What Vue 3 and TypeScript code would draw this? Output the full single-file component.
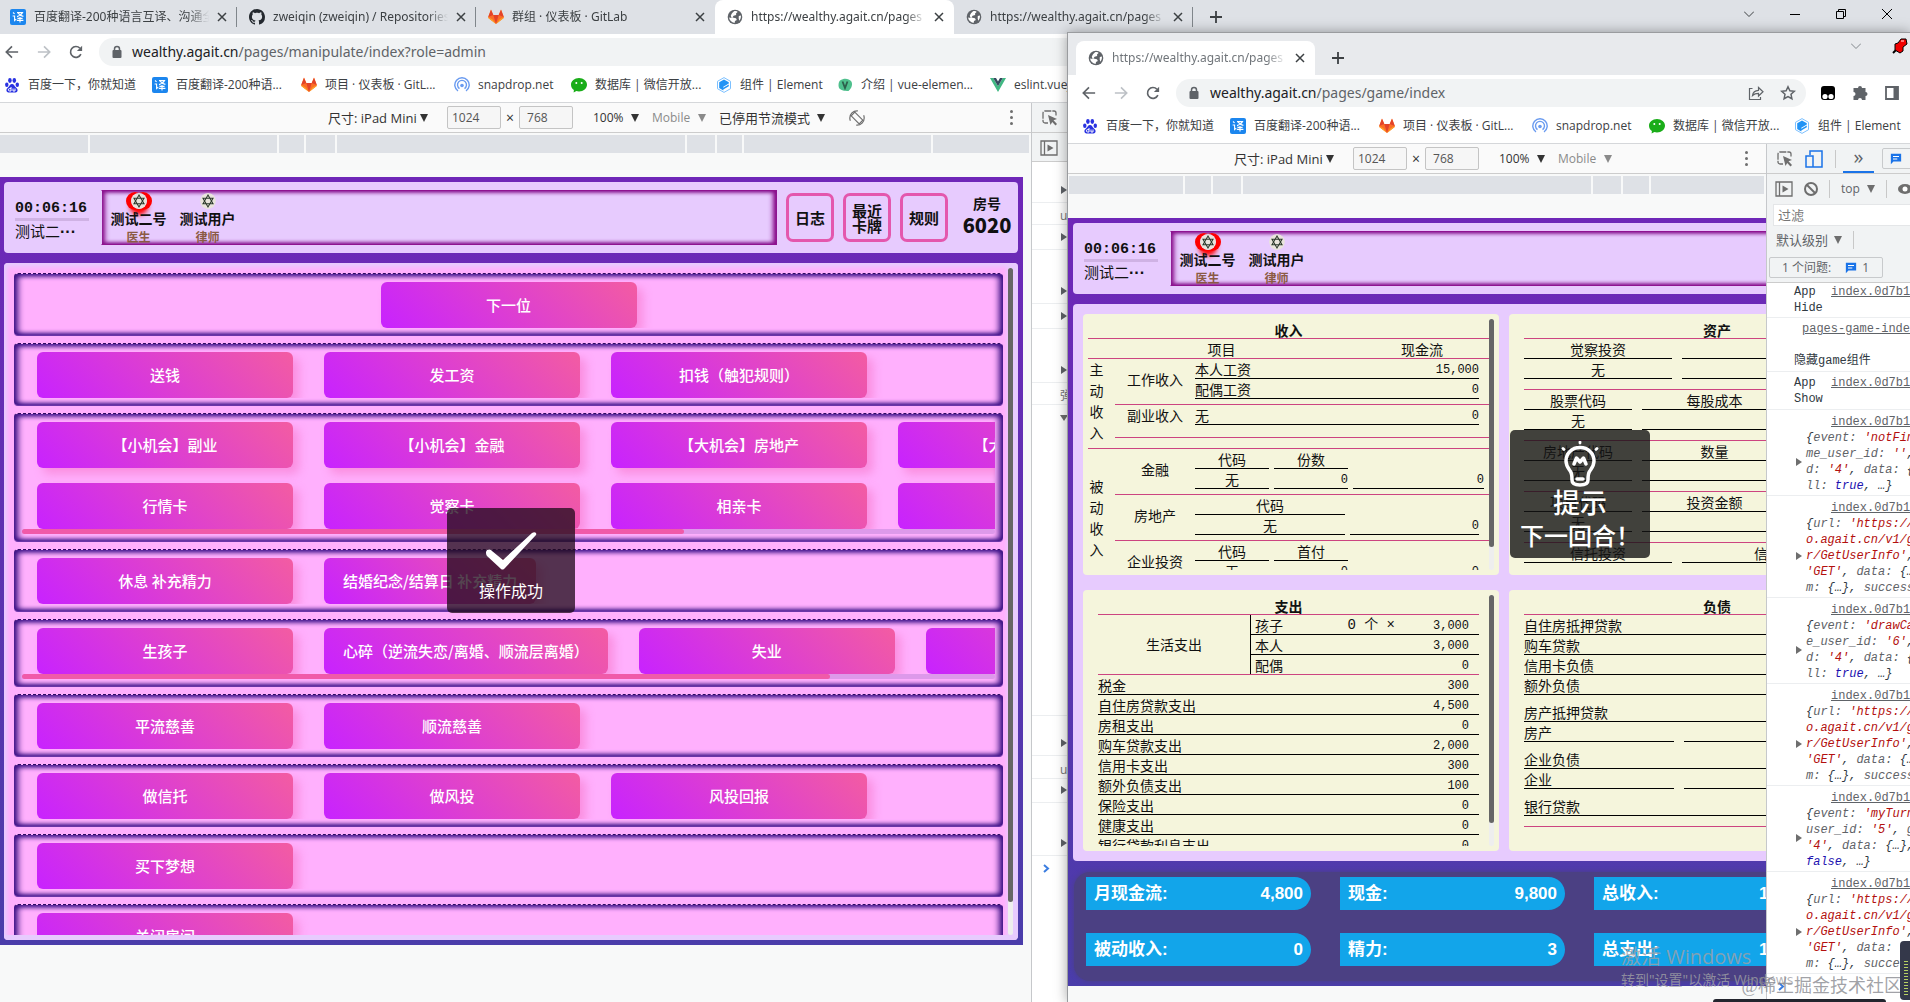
<script setup lang="ts">
interface Tab { icon: string; title: string; active?: boolean }
interface Bookmark { icon: string; label: string; width: number }
interface Action { label: string; fit?: boolean }
interface Section { rows: Action[][]; center?: boolean; bar?: number }
interface Token { t: string; k?: 'str' | 'bool' | 'key' }

const tabs: Tab[] = [
  { icon: 'fanyi', title: '百度翻译-200种语言互译、沟通全' },
  { icon: 'github', title: 'zweiqin (zweiqin) / Repositories' },
  { icon: 'gitlab', title: '群组 · 仪表板 · GitLab' },
  { icon: 'globe', title: 'https://wealthy.agait.cn/pages', active: true },
  { icon: 'globe', title: 'https://wealthy.agait.cn/pages' },
]

const bookmarks: Bookmark[] = [
  { icon: 'baidu', label: '百度一下，你就知道', width: 108 },
  { icon: 'fanyi', label: '百度翻译-200种语...', width: 109 },
  { icon: 'gitlab', label: '项目 · 仪表板 · GitL...', width: 113 },
  { icon: 'snapdrop', label: 'snapdrop.net', width: 77 },
  { icon: 'wechat', label: '数据库 | 微信开放...', width: 105 },
  { icon: 'element', label: '组件 | Element', width: 81 },
  { icon: 'velement', label: '介绍 | vue-elemen...', width: 113 },
  { icon: 'vue', label: 'eslint.vuejs', width: 70 },
]

const players = [
  { name: '测试二号', job: '医生', current: true },
  { name: '测试用户', job: '律师', current: false },
]

const a = (label: string, fit = false): Action => ({ label, fit })
const sections: Section[] = [
  { rows: [[a('下一位')]], center: true },
  { rows: [[a('送钱'), a('发工资'), a('扣钱（触犯规则）')]] },
  {
    rows: [
      [a('【小机会】副业'), a('【小机会】金融'), a('【大机会】房地产'), a('【大机会】企业')],
      [a('行情卡'), a('觉察卡'), a('相亲卡'), a('')],
    ],
    bar: 68,
  },
  { rows: [[a('休息 补充精力'), a('结婚纪念/结算日 补充精力', true)]] },
  { rows: [[a('生孩子'), a('心碎（逆流失恋/离婚、顺流层离婚）', true), a('失业'), a('')]], bar: 83 },
  { rows: [[a('平流慈善'), a('顺流慈善')]] },
  { rows: [[a('做信托'), a('做风投'), a('风投回报')]] },
  { rows: [[a('买下梦想')]] },
  { rows: [[a('关闭房间')]] },
]

const sideRows = [
  { h: 41, kind: 'closed' }, { h: 22, kind: 'text', text: 'ur' }, { h: 25, kind: 'closed' }, { h: 54, kind: 'closed' },
  { h: 25, kind: 'closed' }, { h: 54, kind: 'closed' }, { h: 22, kind: 'text', text: '弹' }, { h: 311, kind: 'open' },
  { h: 40, kind: 'closed' }, { h: 23, kind: 'text', text: 'ur' }, { h: 24, kind: 'closed' }, { h: 53, kind: 'closed' },
]

const expenses = [
  ['税金', '300'], ['自住房贷款支出', '4,500'], ['房租支出', '0'], ['购车贷款支出', '2,000'],
  ['信用卡支出', '300'], ['额外负债支出', '100'], ['保险支出', '0'], ['健康支出', '0'], ['银行贷款利息支出', '0'],
]
const living = [['孩子', '0 个 ×', '3,000'], ['本人', '', '3,000'], ['配偶', '', '0']]

const assets = [
  { wide: true, heads: ['觉察投资', ''], empty: true },
  { wide: false, heads: ['股票代码', '每股成本'], empty: true },
  { wide: false, heads: ['房地产代码', '数量'], empty: true },
  { wide: false, heads: ['项目代码', '投资金额'], empty: true },
  { wide: true, heads: ['信托投资', '信托投资金额'], empty: false },
]
const debts = [
  { rows: ['自住房抵押贷款', '购车贷款', '信用卡负债', '额外负债'], split: '' },
  { rows: ['房产抵押贷款'], split: '房产' },
  { rows: ['企业负债'], split: '企业' },
  { rows: ['银行贷款'], split: '' },
]

const stats = [
  ['月现金流:', '4,800'], ['现金:', '9,800'], ['总收入:', '15,000'],
  ['被动收入:', '0'], ['精力:', '3'], ['总支出:', '10,200'],
]

const s = (t: string): Token => ({ t, k: 'str' })
const b = (t: string): Token => ({ t, k: 'bool' })
const k = (t: string): Token => ({ t, k: 'key' })
const p = (t: string): Token => ({ t })
const request: Token[][] = [
  [p('{'), k('url: '), s("'https://wealthy")],
  [s('o.agait.cn/v1/game')],
  [s("r/GetUserInfo'"), p(','), k(' method')],
  [s("'GET'"), p(', '), k('data: '), p('{…},')],
  [k('m: '), p('{…}, '), k('success:')],
]
const logs: Token[][][] = [
  [
    [p('{'), k('event: '), s("'notFinish'")],
    [k('me_user_id: '), s("''"), p(',')],
    [k('d: '), s("'4'"), p(', '), k('data: '), p('{…}')],
    [k('ll: '), b('true'), p(', …}')],
  ],
  request,
  [
    [p('{'), k('event: '), s("'drawCard'")],
    [k('e_user_id: '), s("'6'"), p(',')],
    [k('d: '), s("'4'"), p(', '), k('data: '), p('{…}')],
    [k('ll: '), b('true'), p(', …}')],
  ],
  request,
  [
    [p('{'), k('event: '), s("'myTurn'")],
    [k('user_id: '), s("'5'"), p(', '), k('game')],
    [s("'4'"), p(', '), k('data: '), p('{…},')],
    [b('false'), p(', …}')],
  ],
  request,
]
</script>

<template>
  <svg class="defs" aria-hidden="true">
    <symbol id="i-fanyi" viewBox="0 0 16 16">
      <rect width="16" height="16" rx="2" fill="#1c86ee" />
      <path d="M3 3.5l1.6 1.4M2.6 7h2v4.6l1.6-1.4M7 3.6h5.6c-1 2-3 3.3-5.6 4M8 4c1 1.600 3 2.900 5.400 3.400M7.400 9.400h5.200M6.800 11.400h6.600M10 8v5.500" stroke="#fff" stroke-width="1.100" fill="none" />
    </symbol>
    <symbol id="i-github" viewBox="0 0 16 16">
      <path fill="#24292f" d="M8 0C3.580 0 0 3.580 0 8c0 3.540 2.290 6.530 5.470 7.590.4.070.55-.17.55-.38 0-.19-.010-.82-.010-1.490-2.010.37-2.530-.49-2.690-.94-.090-.23-.48-.94-.82-1.130-.28-.15-.68-.52-.010-.53.63-.010 1.080.58 1.230.82.72 1.210 1.870.87 2.330.66.070-.52.28-.87.51-1.070-1.780-.2-3.640-.89-3.640-3.950 0-.87.31-1.590.82-2.150-.080-.2-.36-1.020.080-2.120 0 0 .67-.21 2.200.82.64-.18 1.320-.27 2-.27s1.360.090 2 .27c1.530-1.040 2.200-.82 2.200-.82.44 1.100.16 1.920.080 2.120.51.56.82 1.270.82 2.150 0 3.070-1.870 3.750-3.650 3.950.29.25.54.73.54 1.480 0 1.070-.010 1.930-.010 2.200 0 .21.15.46.55.38A8.010 8.010 0 0 0 16 8c0-4.420-3.580-8-8-8z" />
    </symbol>
    <symbol id="i-gitlab" viewBox="0 0 16 16">
      <path fill="#fc6d26" d="M8 15L.6 9.300c-.4-.4-.5-.8-.4-1.300L2.700 1c.1-.3.5-.3.600 0l2 5h5.400l2-5c.1-.3.500-.3.600 0l2.500 7c.1.500 0 .9-.4 1.300z" />
      <path fill="#e24329" d="M8 15L5.300 6h5.400zM.2 8L3 1l2.300 5zM15.800 8L13 1l-2.300 5z" />
      <path fill="#fca326" d="M8 15L.6 9.300.2 8 4.500 10.500zM8 15l7.400-5.700.4-1.300-4.300 2.500z" />
    </symbol>
    <symbol id="i-globe" viewBox="0 0 16 16">
      <circle cx="8" cy="8" r="7.300" fill="#5f6368" />
      <path fill="#fff" d="M7 2.200c2-.4 3 .2 3.600.8L9 4.400 9.200 6 6.600 6.800 5.400 8.600 9 9.200l.8 1.800-1.800 1L7.600 14C4.500 13.500 2.400 11.200 2.100 8.500L4.600 9 3.800 6.400 5 4.300zM11.800 7l2.100-.6c.2 2-.3 3.800-1.600 5.300l-.6-2.200z" />
    </symbol>
    <symbol id="i-baidu" viewBox="0 0 16 16">
      <g fill="#2932e1"><ellipse cx="2.800" cy="7.800" rx="1.700" ry="2.200" /><ellipse cx="5.900" cy="3.500" rx="1.800" ry="2.400" /><ellipse cx="10.300" cy="3.500" rx="1.800" ry="2.400" /><ellipse cx="13.300" cy="7.800" rx="1.700" ry="2.200" /><path d="M8 7c2 0 2.500 2.200 4 3.500s2 2.500 1.200 4c-1 1.700-3 .9-5.200.9s-4.200.8-5.200-.9c-.8-1.500-.3-2.700 1.200-4S6 7 8 7z" /></g>
      <path d="M7 10v4H5.600a1 1 0 0 1 0-2.400H7M9 11.500V14h2v-2.500" stroke="#fff" fill="none" />
    </symbol>
    <symbol id="i-snapdrop" viewBox="0 0 16 16">
      <g fill="none" stroke="#6a9bf0" stroke-width="1.400"><path d="M4 14a7.200 7.200 0 1 1 8 0" /><path d="M5.500 11.600a4.500 4.500 0 1 1 5 0" /></g>
      <circle cx="8" cy="8.500" r="1.800" fill="#6a9bf0" />
    </symbol>
    <symbol id="i-wechat" viewBox="0 0 16 16">
      <path fill="#1aad19" d="M8 1c4.500 0 8 3 8 6.700s-3.500 6.700-8 6.700c-1 0-1.800-.1-2.600-.3L2.600 15.500l.3-2.600C1.100 11.700 0 9.800 0 7.700 0 4 3.500 1 8 1z" />
      <circle cx="5.300" cy="6" r="1" fill="#fff" /><circle cx="10.700" cy="6" r="1" fill="#fff" />
    </symbol>
    <symbol id="i-element" viewBox="0 0 16 16">
      <path d="M8 .6l6.500 3.700v7.400L8 15.400l-6.500-3.700V4.300z" fill="#fff" stroke="#7cc0ff" />
      <path d="M8 2.500l4.800 2.700v1.300L7.300 9.700v1l5.500-3.100v1.700l-5.500 3.200v1L3.200 11V5.200z" fill="#2193f5" />
    </symbol>
    <symbol id="i-velement" viewBox="0 0 16 16">
      <path d="M3 3.500C7 .5 12 1.500 14 4s1 7-2.500 10c-4 0-9-.5-9.800-4C1.300 7.500 1.500 5 3 3.500z" fill="#4fc08d" />
      <path d="M5.500 4.500L8 11l2.500-6.500" fill="none" stroke="#2c5f4c" stroke-width="1.800" />
    </symbol>
    <symbol id="i-vue" viewBox="0 0 16 16">
      <path fill="#41b883" d="M0 1h3.200L8 9.300 12.800 1H16L8 15z" /><path fill="#35495e" d="M3.200 1H6l2 3.500L10 1h2.800L8 9.300z" />
    </symbol>
    <symbol id="i-back" viewBox="0 0 16 16"><path d="M15 8H2M8 1.500L1.500 8 8 14.500" fill="none" stroke="currentColor" stroke-width="1.900" /></symbol>
    <symbol id="i-fwd" viewBox="0 0 16 16"><path d="M1 8h13M8 1.500L14.500 8 8 14.500" fill="none" stroke="currentColor" stroke-width="1.900" /></symbol>
    <symbol id="i-reload" viewBox="0 0 16 16"><path d="M13.600 10.500A6.200 6.200 0 1 1 12.500 3.700" fill="none" stroke="currentColor" stroke-width="1.900" /><path d="M15 .8v6H9z" fill="currentColor" /></symbol>
    <symbol id="i-lock" viewBox="0 0 12 14"><rect x="1.500" y="5" width="9" height="8" rx="1" fill="#5f6368" /><path d="M3.500 6V4a2.500 2.500 0 0 1 5 0v2" fill="none" stroke="#5f6368" stroke-width="1.500" /></symbol>
    <symbol id="i-close" viewBox="0 0 10 10"><path d="M1 1l8 8M9 1L1 9" stroke="currentColor" stroke-width="1.500" /></symbol>
    <symbol id="i-plus" viewBox="0 0 12 12"><path d="M6 0v12M0 6h12" stroke="currentColor" stroke-width="1.800" /></symbol>
    <symbol id="i-chevron" viewBox="0 0 10 6"><path d="M0 .5l5 5 5-5" fill="none" stroke="currentColor" /></symbol>
    <symbol id="i-inspect" viewBox="0 0 16 16"><path d="M6 13H3a2 2 0 0 1-2-2V3a2 2 0 0 1 2-2h9a2 2 0 0 1 2 2v3" fill="none" stroke="#6e6e6e" stroke-width="1.300" stroke-dasharray="7 1" /><path fill="#6e6e6e" d="M6 5l9 4-3.500 1.200L15 14l-1.500 1.500-3.300-3.600L8.500 15z" /></symbol>
    <symbol id="i-side" viewBox="0 0 18 16"><path d="M1 1h16v14H1zM4.500 1v14" fill="none" stroke="#6e6e6e" stroke-width="1.300" /><path d="M7.500 4.500v7L13.500 8z" fill="#6e6e6e" /></symbol>
    <symbol id="i-rotate" viewBox="0 0 16 16"><g fill="none" stroke="#6e6e6e" stroke-width="1.200"><circle cx="8" cy="8" r="7.200" stroke-dasharray="15 7.600" stroke-dashoffset="3" /><path d="M5.800 2.200l8 8-3.600 3.600-8-8z" fill="#fafafa" /></g></symbol>
    <symbol id="i-chat" viewBox="0 0 14 14"><path fill="#1a73e8" d="M1 1h12v9H4l-3 3z" /><path d="M3.500 4h7M3.500 7h5" stroke="#fff" stroke-width="1.200" /></symbol>
    <symbol id="i-avatar" viewBox="0 0 20 20"><circle cx="10" cy="10" r="10" fill="#e9e4dc" /><path d="M10 2.500l6.300 11H3.700zM10 17.500L3.700 6.500h12.600z" fill="none" stroke="#2c3a2c" stroke-width="1.300" /></symbol>
  </svg>

  <div class="desktop">
    <main class="window back">
      <header class="tabstrip">
        <div v-for="(tab, i) in tabs" :key="i" class="tab" :class="{ active: tab.active, split: i === 0 || i === 1 || i === 4 }">
          <svg class="i16"><use :href="'#i-' + tab.icon" /></svg>
          <span class="tab-title">{{ tab.title }}</span>
          <button class="icon-btn" aria-label="关闭"><svg class="i10"><use href="#i-close" /></svg></button>
        </div>
        <button class="icon-btn plus" aria-label="新标签页"><svg class="i12"><use href="#i-plus" /></svg></button>
        <div class="win-controls">
          <button class="icon-btn" aria-label="搜索标签页"><svg width="10" height="6"><use href="#i-chevron" /></svg></button>
          <button class="icon-btn" aria-label="最小化"><svg width="10" height="10"><path d="M0 5.500h10" stroke="#000" /></svg></button>
          <button class="icon-btn" aria-label="还原"><svg width="10" height="10"><path d="M.5 2.500h7v7h-7zM2.500 2.500v-2h7v7h-2" fill="none" stroke="#000" /></svg></button>
          <button class="icon-btn" aria-label="关闭窗口"><svg width="10" height="10"><path d="M0 0l10 10M10 0L0 10" stroke="#000" /></svg></button>
        </div>
      </header>

      <nav class="toolbar">
        <button class="icon-btn" aria-label="后退"><svg class="i14"><use href="#i-back" /></svg></button>
        <button class="icon-btn dim" aria-label="前进"><svg class="i14"><use href="#i-fwd" /></svg></button>
        <button class="icon-btn" aria-label="刷新"><svg class="i14"><use href="#i-reload" /></svg></button>
        <div class="omnibox">
          <svg width="12" height="14"><use href="#i-lock" /></svg>
          <span class="url"><b>wealthy.agait.cn</b>/pages/manipulate/index?role=admin</span>
        </div>
      </nav>
      <nav class="bookmarks">
        <a v-for="m in bookmarks" :key="m.label" href="#"><svg class="i16"><use :href="'#i-' + m.icon" /></svg><span :style="{ width: m.width + 'px' }">{{ m.label }}</span></a>
      </nav>

      <div class="workarea">
        <section class="device">
          <div class="device-bar">
            <label class="pick"><select class="w-size" aria-label="尺寸"><option>尺寸: iPad Mini</option></select></label>
            <input class="dim-in" value="1024" aria-label="宽度">
            <span class="times">×</span>
            <input class="dim-in" value=" 768" aria-label="高度">
            <label class="pick zoom"><select class="w-zoom" aria-label="缩放"><option>100%</option></select></label>
            <label class="pick gray"><select class="w-mobile" aria-label="设备类型"><option>Mobile</option></select></label>
            <label class="pick"><select class="w-net" aria-label="节流"><option>已停用节流模式</option></select></label>
            <svg class="rot i16"><use href="#i-rotate" /></svg>
            <button class="icon-btn dots" aria-label="更多"><i /><i /><i /></button>
          </div>
          <div class="ruler r1"><i v-for="n in 9" :key="n" /></div>

          <div class="screen screen-full">
            <header class="game-head">
              <div class="clock"><strong>00:06:16</strong><span>测试二<b>···</b></span></div>
              <div class="players">
                <div v-for="u in players" :key="u.name" class="player" :class="{ current: u.current }">
                  <svg class="avatar"><use href="#i-avatar" /></svg><b>{{ u.name }}</b><small>{{ u.job }}</small>
                </div>
              </div>
              <button class="head-btn">日志</button>
              <button class="head-btn">最近卡牌</button>
              <button class="head-btn">规则</button>
              <div class="room"><span>房号</span><strong>6020</strong></div>
            </header>
            <div class="board">
              <div class="sections">
                <section v-for="(sec, i) in sections" :key="i" class="section">
                  <div class="strip" :class="{ center: sec.center }">
                    <div v-for="(row, r) in sec.rows" :key="r" class="actions">
                      <button v-for="(act, j) in row" :key="j" class="action" :class="{ fit: act.fit }">{{ act.label }}</button>
                    </div>
                  </div>
                  <div v-if="sec.bar" class="hbar"><i :style="{ width: sec.bar + '%' }" /></div>
                </section>
              </div>
              <div class="vbar"><i /></div>
            </div>
            <div class="toast ok">
              <svg width="52" height="38" viewBox="0 0 52 38"><path d="M1 20c1-3 4-3 6-1l11 9L47 1c3-2 5 0 4 2L20 36c-2 2-3 2-5 0L2 24c-1-1-1-3-1-4z" fill="#fff" /></svg>
              <span>操作成功</span>
            </div>
          </div>
        </section>

        <aside class="side">
          <div class="side-bar"><svg class="i16"><use href="#i-inspect" /></svg></div>
          <div class="side-bar short"><svg width="18" height="16"><use href="#i-side" /></svg></div>
          <div v-for="(row, i) in sideRows" :key="i" class="side-row" :class="row.kind" :style="{ height: row.h + 'px' }">
            <span v-if="row.kind === 'text'">{{ row.text }}</span><i v-else />
          </div>
          <svg class="prompt" width="7" height="9"><path d="M1 1l4 3.500L1 8" fill="none" stroke="#3b7de0" stroke-width="2" /></svg>
        </aside>
      </div>
    </main>

    <section class="window front">
      <header class="tabstrip">
        <div class="tab active">
          <svg class="i16"><use href="#i-globe" /></svg>
          <span class="tab-title">https://wealthy.agait.cn/pages</span>
          <button class="icon-btn" aria-label="关闭"><svg class="i10"><use href="#i-close" /></svg></button>
        </div>
        <button class="icon-btn plus" aria-label="新标签页"><svg class="i12"><use href="#i-plus" /></svg></button>
        <div class="front-controls">
          <svg width="10" height="6"><use href="#i-chevron" /></svg>
          <svg width="16" height="16" viewBox="0 0 16 16"><path d="M1 15l4-4" stroke="#000" stroke-width="2" /><path d="M3 6l3-1 3-4 5 0 1 5-4 3 0 4-3 2-5-3z" fill="#f00000" stroke="#000" /><path d="M9 3l3 0" stroke="#ff9c9c" stroke-width="1.500" /></svg>
        </div>
      </header>
      <nav class="toolbar">
        <button class="icon-btn" aria-label="后退"><svg class="i14"><use href="#i-back" /></svg></button>
        <button class="icon-btn dim" aria-label="前进"><svg class="i14"><use href="#i-fwd" /></svg></button>
        <button class="icon-btn" aria-label="刷新"><svg class="i14"><use href="#i-reload" /></svg></button>
        <div class="omnibox">
          <svg width="12" height="14"><use href="#i-lock" /></svg>
          <span class="url"><b>wealthy.agait.cn</b>/pages/game/index</span>
          <svg class="i16" viewBox="0 0 16 16"><path d="M4.500 3.500H1.500v11h11v-2.500M4.500 10.500c.5-3.500 2.500-5 6-5.200V2.500l4.500 4.300-4.500 4.200V8.300c-3 0-4.500.7-6 2.200z" fill="none" stroke="#5f6368" stroke-width="1.200" /></svg>
          <svg class="i16" viewBox="0 0 16 16"><path d="M8 1.800l1.900 4 4.400.5-3.300 3 .9 4.400L8 11.500l-3.900 2.200.9-4.400-3.300-3 4.400-.5z" fill="none" stroke="#5f6368" stroke-width="1.500" /></svg>
        </div>
        <div class="exts">
          <svg class="i16" viewBox="0 0 16 16"><rect x="1" y="1" width="14" height="14" rx="3" /><circle cx="5" cy="11.500" r="2.600" fill="#fff" /><circle cx="11" cy="11.500" r="2.600" fill="#fff" /></svg>
          <svg class="i16" viewBox="0 0 16 16"><path fill="#5f6368" d="M6 3a2 2 0 0 1 4 0h3.500v4a2 2 0 0 1 0 4v4H10a2 2 0 0 0-4 0H1.500v-4a2 2 0 0 0 0-4V3z" /></svg>
          <svg class="i16" viewBox="0 0 16 16"><path fill="none" stroke="#5f6368" stroke-width="1.800" d="M2 2h12v12H2z" /><path fill="#5f6368" d="M9.500 2H14v12H9.500z" /></svg>
        </div>
      </nav>
      <nav class="bookmarks">
        <a v-for="m in bookmarks.slice(0, 6)" :key="m.label" href="#"><svg class="i16"><use :href="'#i-' + m.icon" /></svg><span :style="{ width: m.width + 'px' }">{{ m.label }}</span></a>
      </nav>

      <div class="workarea">
        <section class="device">
          <div class="device-bar">
            <label class="pick"><select class="w-size" aria-label="尺寸"><option>尺寸: iPad Mini</option></select></label>
            <input class="dim-in" value="1024" aria-label="宽度">
            <span class="times">×</span>
            <input class="dim-in" value=" 768" aria-label="高度">
            <label class="pick zoom"><select class="w-zoom" aria-label="缩放"><option>100%</option></select></label>
            <label class="pick gray"><select class="w-mobile" aria-label="设备类型"><option>Mobile</option></select></label>
            <button class="icon-btn dots" aria-label="更多"><i /><i /><i /></button>
          </div>
          <div class="ruler r2"><i v-for="n in 7" :key="n" /></div>

          <div class="screen">
            <header class="game-head">
              <div class="clock"><strong>00:06:16</strong><span>测试二<b>···</b></span></div>
              <div class="players">
                <div v-for="u in players" :key="u.name" class="player" :class="{ current: u.current }">
                  <svg class="avatar"><use href="#i-avatar" /></svg><b>{{ u.name }}</b><small>{{ u.job }}</small>
                </div>
              </div>
            </header>

            <div class="ledger">
              <article class="card">
                <div class="card-body">
                  <h3>收入</h3>
                  <table>
                    <tbody>
                      <tr class="in-head"><th>项目</th><th>现金流</th></tr>
                    </tbody>
                  </table>
                  <div class="block">
                    <div class="upright">主动收入</div>
                    <div>
                      <div class="group">
                        <span>工作收入</span>
                        <table class="pad10">
                          <tbody>
                            <tr class="pair"><td>本人工资</td><td class="num">15,000</td></tr>
                            <tr class="pair"><td>配偶工资</td><td class="num">0</td></tr>
                          </tbody>
                        </table>
                      </div>
                      <div class="group loose">
                        <span>副业收入</span>
                        <table class="pad10">
                          <tbody><tr class="pair"><td>无</td><td class="num">0</td></tr></tbody>
                        </table>
                      </div>
                    </div>
                  </div>
                  <div class="block passive">
                    <div class="upright">被动收入</div>
                    <div>
                      <div class="group">
                        <span>金融</span>
                        <table class="c3 pad5">
                          <tbody>
                            <tr><th>代码</th><th>份数</th></tr>
                            <tr><td>无</td><td class="num">0</td><td class="num">0</td></tr>
                          </tbody>
                        </table>
                      </div>
                      <div class="group">
                        <span>房地产</span>
                        <table class="c2 pad10">
                          <tbody>
                            <tr><th>代码</th></tr>
                            <tr><td>无</td><td class="num">0</td></tr>
                          </tbody>
                        </table>
                      </div>
                      <div class="group">
                        <span>企业投资</span>
                        <table class="c3 pad10">
                          <tbody>
                            <tr><th>代码</th><th>首付</th></tr>
                            <tr><td>无</td><td class="num">0</td><td class="num">0</td></tr>
                          </tbody>
                        </table>
                      </div>
                    </div>
                  </div>
                </div>
                <div class="vbar"><i /></div>
              </article>

              <article class="card indent">
                <div class="card-body">
                  <h3>资产</h3>
                  <table v-for="(g, i) in assets" :key="i" class="asset" :class="{ wide: g.wide, last: !g.empty }">
                    <tbody>
                      <tr><th v-for="(h, j) in g.heads" :key="j">{{ h }}</th></tr>
                      <tr v-if="g.empty"><td>无</td><td /></tr>
                    </tbody>
                  </table>
                </div>
              </article>

              <article class="card indent">
                <div class="card-body">
                  <h3>支出</h3>
                  <div class="living">
                    <span>生活支出</span>
                    <table>
                      <tbody>
                        <tr v-for="l in living" :key="l[0]"><td>{{ l[0] }}</td><td class="num count">{{ l[1] }}</td><td class="num">{{ l[2] }}</td></tr>
                      </tbody>
                    </table>
                  </div>
                  <table class="spend">
                    <tbody>
                      <tr v-for="e in expenses" :key="e[0]" class="pair"><td>{{ e[0] }}</td><td class="num">{{ e[1] }}</td></tr>
                    </tbody>
                  </table>
                </div>
                <div class="vbar"><i /></div>
              </article>

              <article class="card indent">
                <div class="card-body">
                  <h3>负债</h3>
                  <div class="debts">
                    <table v-for="(g, i) in debts" :key="i">
                      <tbody>
                        <tr v-for="d in g.rows" :key="d" class="pair"><td>{{ d }}</td><td /></tr>
                        <tr v-if="g.split" class="halves"><td>{{ g.split }}</td><td /></tr>
                      </tbody>
                    </table>
                  </div>
                </div>
              </article>
            </div>

            <footer class="stats">
              <dl v-for="st in stats" :key="st[0]"><dt>{{ st[0] }}</dt><dd>{{ st[1] }}</dd></dl>
            </footer>

            <div class="toast tip">
              <svg width="40" height="46" viewBox="0 0 40 46" fill="none" stroke="#fff" stroke-width="3.500" stroke-linecap="round" stroke-linejoin="round">
                <path d="M20 6.500c8.300 0 14 6 14 13.500 0 5-2.500 7.500-4.500 10.500-1.500 2.300-1.500 5-1.500 8.500 0 3-2 5-8 5s-8-2-8-5c0-3.500 0-6.200-1.500-8.500C8.500 27.500 6 25 6 20 6 12.500 11.700 6.500 20 6.500zM14 23l2.500-6 3.500 4 3.500-4 2.500 6M17 38h6" />
                <path d="M20 1v1M3 7.500l1 1M37 7.500l-1 1" stroke-width="2.800" />
              </svg>
              <strong>提示</strong><span>下一回合！</span>
            </div>
          </div>
        </section>

        <aside class="devtools">
          <div class="dt-row">
            <svg class="i16"><use href="#i-inspect" /></svg>
            <svg width="18" height="18" viewBox="0 0 18 18"><path d="M5 5V1h12v16H8M1 6h7v11H1z" fill="none" stroke="#1a73e8" stroke-width="1.500" /></svg>
            <i class="sep" /><span class="more">»</span><button class="issue-btn" aria-label="问题"><svg class="i12"><use href="#i-chat" /></svg></button>
          </div>
          <div class="dt-row">
            <svg width="18" height="16"><use href="#i-side" /></svg>
            <svg class="i14" viewBox="0 0 14 14"><circle cx="7" cy="7" r="6" fill="none" stroke="#6e6e6e" stroke-width="2" /><path d="M3 3l8 8" stroke="#6e6e6e" stroke-width="2" /></svg>
            <i class="sep" /><label class="pick mid"><select class="w-top" aria-label="上下文"><option>top</option></select></label><i class="sep" />
            <svg class="i14" viewBox="0 0 14 14"><ellipse cx="7" cy="7" rx="7" ry="5" fill="#6e6e6e" /><circle cx="7" cy="7" r="2.500" fill="#fff" /></svg>
          </div>
          <input class="filter" placeholder="过滤" aria-label="过滤">
          <div class="dt-row level"><label class="pick mid"><select class="w-level" aria-label="日志级别"><option>默认级别</option></select></label><i class="sep" /></div>
          <div class="issues"><button>1 个问题: <svg class="i12"><use href="#i-chat" /></svg> 1</button></div>

          <div class="console">
            <div class="log first"><a href="#">index.0d7b1</a><p>App<br>Hide</p></div>
            <div class="log"><a href="#" class="wide-link">pages-game-index</a><p class="gap">隐藏game组件</p></div>
            <div class="log"><a href="#">index.0d7b1</a><p>App<br>Show</p></div>
            <div v-for="(log, i) in logs" :key="i" class="log object">
              <a href="#">index.0d7b1</a>
              <div class="obj">
                <i class="arrow" />
                <code><span v-for="(line, j) in log" :key="j"><em v-for="(tok, n) in line" :key="n" :class="tok.k">{{ tok.t }}</em></span></code>
              </div>
            </div>
            <svg class="prompt" width="7" height="9"><path d="M1 1l4 3.500L1 8" fill="none" stroke="#3b7de0" stroke-width="2" /></svg>
          </div>
        </aside>
      </div>
    </section>

    <div class="activate"><p>激活 Windows</p><small>转到"设置"以激活 Windows</small></div>
    <div class="credit">@稀土掘金技术社区</div>
    <div class="meter" />
    <div class="dock" />
  </div>
</template>

<style>
html, body { margin: 0; overflow: hidden; }
</style>

<style scoped>
* { box-sizing: border-box; }
.defs { position: absolute; width: 0; height: 0; }
.desktop { position: relative; height: 100vh; overflow: hidden; font: 12px/16px "Open Sans", "Noto Sans CJK SC", sans-serif; color: #3c4043; }
button, input, select { font: inherit; color: inherit; }
svg { display: block; flex: none; }
.i10 { width: 10px; height: 10px; }
.i12 { width: 12px; height: 12px; }
.i14 { width: 14px; height: 14px; }
.i16 { width: 16px; height: 16px; }
.icon-btn { border: 0; background: none; padding: 0; display: flex; align-items: center; justify-content: center; color: inherit; flex: none; }

.window { display: flex; flex-direction: column; background: #fff; overflow: hidden; }
.back { height: 100%; }
.front { position: absolute; left: 1067px; right: 0; top: 32px; bottom: 0; border-top: 1px solid #9a9c9f; border-left: 1px solid #9a9c9f; box-shadow: 0 0 12px rgba(0, 0, 0, .35); }

.tabstrip { display: flex; height: 34px; background: #dee1e6; flex: none; }
.front .tabstrip { height: 42px; background: #e8eaed; padding: 8px 0 0 8px; }
.tab { display: flex; align-items: center; width: 239px; padding: 0 10px 0 12px; position: relative; flex: none; }
.back .tab:first-child { width: 237px; padding-left: 10px; }
.tab.active { background: #fff; border-radius: 8px 8px 0 0; }
.tab.split::after { content: ""; position: absolute; right: 0; top: 7px; width: 1px; height: 20px; background: #80868b; }
.tab-title { flex: 1; margin: 0 8px; overflow: hidden; white-space: nowrap; mask-image: linear-gradient(90deg, #000 88%, transparent); font-family: "Noto Sans", "Noto Sans CJK SC", sans-serif; }
.front .tab-title { color: #70757a; }
.back .tab .i10, .plus { color: #3c4043; }
.plus { width: 46px; height: 34px; }
.win-controls { display: flex; margin-left: auto; height: 28px; }
.win-controls .icon-btn { width: 46px; }
.front-controls { margin-left: auto; display: flex; gap: 31px; align-items: center; height: 10px; padding-right: 2px; color: #80868b; }

.toolbar { display: flex; align-items: center; height: 36px; color: #5f6368; padding-left: 5px; flex: none; }
.front .toolbar { padding-left: 14px; }
.toolbar .icon-btn { width: 14px; margin-right: 18px; }
.toolbar .dim { color: #bdc1c6; }
.omnibox { display: flex; align-items: center; flex: 1; height: 28px; border-radius: 14px; background: #f1f3f4; margin-left: -2px; padding: 0 10px 0 12px; gap: 9px; font-size: 14px; }
.front .omnibox { gap: 16px; }
.front .omnibox .url { margin-left: -6px; }
.url { flex: 1; color: #5f6368; white-space: nowrap; font-family: "Noto Sans", sans-serif; }
.url b { font-weight: 400; color: #202124; }
.exts { display: flex; gap: 16px; padding: 0 10px 0 14px; }
.bookmarks { display: flex; gap: 16px; align-items: center; height: 33px; padding: 0 0 2px 4px; border-bottom: 1px solid #d5d7da; flex: none; overflow: hidden; }
.front .bookmarks { padding-left: 14px; }
.bookmarks a { display: flex; align-items: center; gap: 8px; color: #3c4043; text-decoration: none; white-space: nowrap; flex: none; }

.workarea { display: flex; flex: 1; min-height: 0; }
.device { width: 1032px; flex: none; background: #f8f9f9; border-right: 1px solid #c6c8cb; overflow: hidden; }
.front .device { flex: 1; width: auto; min-width: 0; }
.device-bar { position: relative; display: flex; align-items: center; height: 30px; padding-left: 328px; background: #fafafa; border-bottom: 1px solid #ccc; color: #333; white-space: nowrap; }
.front .device-bar { padding-left: 166px; }
.pick { display: flex; align-items: center; margin-right: 16px; }
.pick::after { content: ""; border: 4px solid transparent; border-top: 8px solid #333; border-bottom: 0; }
.pick select { appearance: none; border: 0; background: none; padding: 0; height: 18px; }
.pick.gray { color: #8a8a8a; }
.pick.gray::after { border-top-color: #8a8a8a; }
.pick .w-size, .pick .w-net { font-size: 13px; }
.w-size { width: 92px; }
.w-zoom { width: 38px; }
.w-mobile { width: 46px; }
.w-net { width: 98px; }
.w-top { width: 26px; }
.w-level { width: 58px; }
.dim-in { width: 54px; height: 23px; border: 1px solid #c4c4c4; border-radius: 2px; background: #f6f6f6; padding: 0 4px; color: #555; white-space: pre; }
.device-bar .pick:first-child { margin-right: 19px; }
.times { width: 18px; text-align: center; font-size: 14px; }
.zoom { margin-left: 20px; }
.zoom.pick { margin-right: 13px; }
.pick.gray { margin-right: 13px; }
.rot { margin-left: 8px; }
.dots { margin-left: auto; width: 40px; flex-direction: column; gap: 3px; }
.dots i { width: 3px; height: 3px; border-radius: 50%; background: #6e6e6e; }
.ruler { display: grid; column-gap: 2px; height: 18px; margin: 2px 2px 24px 0; }
.ruler i { background: #dee1e6; }
.r1 { grid-template-columns: 88px 187px 25px 29px 348px 28px 25px 187px 1fr; }
.r2 { grid-template-columns: 114px 26px 28px 348px 28px 26px 1fr; margin-left: 1px; }

.screen { position: relative; height: 768px; padding: 5px 0 0 5px; background: linear-gradient(#6f27b8, #4a3daa); font-family: "Noto Sans CJK SC", sans-serif; color: #111; overflow: hidden; }
.screen-full { width: 1023px; padding-right: 5px; padding-left: 4px; }
.game-head { display: flex; height: 71px; padding: 8px 0 8px 11px; background: #e7cbfe; border-radius: 4px; margin-bottom: 10px; }
.clock { width: 74px; margin-right: 12px; display: flex; flex-direction: column; font-size: 15px; padding-top: 9px; white-space: nowrap; }
.clock strong { font: 700 15px/20px "Liberation Mono", monospace; height: 22px; border-bottom: 3px solid #cfb2e4; }
.clock span { line-height: 20px; }
.clock b { font-family: "Liberation Sans", sans-serif; font-size: 16px; }
.players { flex: 1; display: flex; border: 1px solid #8f1490; border-left: 1px dashed #e7cbfe; background-color: #e7cbfe; box-shadow: inset 4px 0 5px -1px #8a0d8b, inset -4px 0 5px -1px #8a0d8b, inset 0 2px 4px -1px #8a2a9b, inset 0 -2px 4px -1px #8a2a9b; padding-left: 2px; overflow: hidden; }
.player { width: 69px; display: flex; flex-direction: column; align-items: center; font-size: 14px; }
.avatar { width: 16px; height: 16px; margin-top: 2px; border-radius: 50%; }
.current .avatar { box-shadow: -4px 0 0 1px #f00, 4px 0 0 1px #f00, 0 5px 5px 1px #f00; }
.player b { line-height: 19px; }
.player small { font-size: 12px; line-height: 18px; color: #8b5a44; font-weight: 700; }
.head-btn { width: 48px; height: 49px; margin: 3px 0 0 9px; border: 3px solid #e457ad; border-radius: 7px; background: transparent; padding: 0 5px; font-size: 15px; font-weight: 700; line-height: 15px; }
.room { width: 70px; padding: 4px 0 0 8px; display: flex; flex-direction: column; align-items: center; font-weight: 700; font-size: 14px; line-height: 18px; }
.room strong { font-size: 20px; line-height: 26px; }

.board { display: flex; height: 677px; padding: 5px 5px 5px 0; border-radius: 4px; background: linear-gradient(90deg, #e7cbfe, #ffb0fd 6px, #ffb0fd 1000px, #e7cbfe 1006px); box-shadow: inset 0 5px 4px -1px #e7cbfe, inset 0 -5px 0 #e7cbfe; }
.sections { flex: 1; min-width: 0; padding: 5px 5px 0 10px; overflow: hidden; }
.section { padding: 8px 8px 7px; margin-bottom: 8px; border-radius: 4px; border-top: 1px dashed #2e0a63; background: #ffb0fd; box-shadow: inset 5px 0 6px -1px #3d1285, inset -5px 0 6px -1px #3d1285, inset 0 3px 5px -1px #5b2aa0, inset 0 -2px 4px -1px #5b2aa0, 0 1px 0 #6a35a8; }
.strip { overflow: hidden; display: flex; flex-direction: column; gap: 15px; padding-left: 15px; }
.strip.center { align-items: center; padding-left: 0; }
.actions { display: flex; gap: 31px; }
.action { width: 256px; flex: none; height: 46px; border: 0; border-radius: 6px; padding: 0; background: linear-gradient(45deg, #c822ff, #f35ca2); color: #fff; font-size: 15px; font-weight: 500; white-space: nowrap; box-shadow: 6px 6px 10px rgba(243, 92, 180, .4); }
.action.fit { width: auto; padding: 0 19px; }
.hbar { height: 5px; background: #dd99ea; border-radius: 3px; }
.hbar i { display: block; height: 5px; border-radius: 3px; background: #f05aa9; width: 58%; }
.vbar { width: 5px; flex: none; background: #eee; border-radius: 3px; }
.vbar i { display: block; height: 95%; background: #666; border-radius: 3px; }

.toast { position: absolute; display: flex; flex-direction: column; align-items: center; background: rgba(20, 20, 20, .8); color: #fff; border-radius: 5px; }
.ok { left: 447px; top: 331px; width: 128px; height: 105px; padding-top: 24px; font-size: 16px; gap: 8px; background: rgba(30, 10, 25, .76); }
.ok span { line-height: 24px; }
.tip { left: 442px; top: 212px; width: 140px; height: 128px; padding-top: 11px; }
.tip strong { font-size: 27px; font-weight: 500; line-height: 30px; }
.tip span { font-size: 24px; font-weight: 500; line-height: 36px; white-space: nowrap; }

.side { flex: 1; background: #fff; }
.side-bar { height: 30px; padding: 7px 10px; background: #f1f3f4; border-bottom: 1px solid #ccc; }
.side-bar.short { padding-left: 8px; height: 29px; }
.side-row { border-bottom: 1px solid #eceef0; padding: 2px 0 0 28px; color: #777; display: flex; align-items: flex-end; }
.side-row i { border: 4px solid transparent; border-left: 6px solid #5f6368; border-right: 0; margin: 0 0 8px 1px; }
.side-row.open { align-items: flex-start; }
.side-row.open i { border: 4px solid transparent; border-top: 6px solid #6e6e6e; border-bottom: 0; margin: 8px 0 0; }
.side .prompt { margin: 8px 0 0 11px; }

/* player-facing finance sheet */
.front .game-head { margin-right: -10px; }
.front .players { margin-right: -80px; flex: 1 0 600px; }
.ledger { display: grid; grid-template-columns: 416px 416px; gap: 15px 10px; padding: 10px; background: #e7cbfe; border-radius: 4px 0 0 4px; font-size: 14px; line-height: 19px; }
.card { height: 261px; display: flex; padding: 5px; background: #f5f5dc; border-radius: 4px; }
.card-body { flex: 1; min-width: 0; overflow: hidden; }
.card.indent .card-body { padding: 0 10px; }
.card .vbar i { height: 91%; }
h3 { margin: 0; font-size: 14px; font-weight: 700; text-align: center; height: 20px; line-height: 22px; border-bottom: 1px solid #cc4480; }
table, tbody { display: block; }
tr { display: grid; }
th, td { padding: 0; font-weight: 400; height: 20px; border-bottom: 1px solid #000; text-align: center; white-space: nowrap; line-height: 21px; }
.num { font-family: "Liberation Mono", "Noto Sans CJK SC", monospace; font-size: 12px; line-height: 22px; text-align: right; }
.in-head { grid-template-columns: 267px 1fr; border-bottom: 1px solid #cc4480; }
.in-head th { border: 0; height: 19px; }
.block { display: grid; grid-template-columns: 27px 1fr; border-bottom: 1px solid #cc4480; }
.block:not(.passive) { height: 90px; }
.upright { width: 17px; line-height: 21px; text-align: center; white-space: normal; overflow-wrap: anywhere; }
.passive .upright { padding-top: 27px; }
.group { display: grid; grid-template-columns: 80px 1fr; align-items: center; border-bottom: 1px solid #cc4480; padding-bottom: 5px; }
.group.loose { padding-bottom: 12px; }
.group > span { text-align: center; }
.pair { grid-template-columns: 1fr auto; }
.pair td:first-child { text-align: left; }
.pad10 { padding-right: 10px; }
.pad5 { padding-right: 5px; }
.c3 tr { column-gap: 5px; grid-template-columns: 74px 74px 1fr; }
.c2 tr { column-gap: 5px; grid-template-columns: 150px 1fr; }
.asset { padding-bottom: 10px; border-bottom: 1px solid #cc4480; }
.asset tr { column-gap: 10px; grid-template-columns: 108px 145px 108px; }
.asset.wide tr { grid-template-columns: 148px 1fr; }
.asset.last { border: 0; padding: 0; }
.living { display: grid; grid-template-columns: 152px 1fr; align-items: center; border-bottom: 1px solid #cc4480; }
.living > span { text-align: center; }
.living table { border-left: 1px solid #000; }
.living tr { grid-template-columns: 70px 74px 1fr; }
.living td { padding-right: 10px; }
.living td:first-child { text-align: left; padding-left: 4px; }
.living .count { padding-right: 0; font-size: 14px; line-height: 20px; }
.living tr:last-child td { border: 0; height: 19px; }
.spend .num { padding-right: 10px; }
.debts { display: grid; gap: 7px; padding-bottom: 10px; border-bottom: 1px solid #cc4480; }
.halves { grid-template-columns: 150px 1fr; column-gap: 10px; }
.halves td:first-child { text-align: left; }
.stats { display: grid; grid-template-columns: 225px 225px 225px; gap: 23px 29px; margin: 11px -20px 0 1px; padding: 5px 0 15px 12px; background: #4b4083; border-radius: 16px; box-shadow: 0 0 5px #4b4083; }
.stats dl { margin: 0; height: 33px; display: flex; justify-content: space-between; align-items: center; padding: 0 8px; background: #12a5ea; border-radius: 0 17px 17px 0; color: #fff; font: 700 17px/24px "Liberation Sans", "Noto Sans CJK SC", sans-serif; }
.stats dd { margin: 0; }

.devtools { width: 143px; flex: none; background: #f1f3f4; overflow: hidden; color: #5f6368; display: flex; flex-direction: column; }
.dt-row { display: flex; align-items: center; height: 30px; gap: 12px; padding-left: 10px; flex: none; border-bottom: 1px solid #ccc; }
.dt-row + .dt-row { border: 0; gap: 11px; height: 29px; padding-left: 8px; }
.sep { width: 1px; height: 18px; background: #c8c8c8; flex: none; }
.more { font-size: 20px; line-height: 26px; width: 31px; margin-left: -5px; height: 29px; text-align: center; border-bottom: 2px solid #1a73e8; flex: none; }
.issue-btn { height: 21px; width: 40px; padding: 0 7px; border: 1px solid #c8cacc; border-radius: 2px; background: #f1f3f4; margin-left: -4px; flex: none; }
.pick.mid { margin: 0; }
.pick.mid::after { border-top-color: #6e6e6e; }
.filter { height: 22px; margin: 1px 0 0 6px; width: 150px; border: 1px solid #e4e6e8; background: #fff; padding: 0 4px; font-size: 13px; flex: none; }
.filter::placeholder { color: #777; opacity: 1; }
.level { border: 0; padding-left: 9px; font-size: 13px; height: 28px; gap: 11px; }
.issues { height: 29px; padding: 3px 0 0 2px; border-bottom: 1px solid #ccc; flex: none; }
.issues button { display: flex; align-items: center; gap: 5px; width: 114px; height: 21px; padding: 0 0 0 12px; border: 1px solid #c8cacc; border-radius: 2px; background: none; white-space: nowrap; }
.issues svg { margin-left: 9px; }
.console { flex: 1; background: #fff; color: #303942; font: 12px/16px "Liberation Mono", "Noto Sans CJK SC", monospace; }
.log { position: relative; padding: 3px 0 2px 27px; border-bottom: 1px solid #eceef0; display: flow-root; white-space: nowrap; }
.log.first { padding: 1px 0 1px 27px; }
.log a { float: right; width: 79px; color: #5f6368; }
.log .wide-link { width: 108px; }
.log p { margin: 0; }
.log p.gap { padding-top: 32px; width: 110px; }
.obj { clear: both; display: flex; align-items: center; gap: 4px; padding-left: 2px; }
.log.object { padding-top: 4px; padding-bottom: 1px; }
.arrow { border: 4px solid transparent; border-left: 6px solid #6e6e6e; border-right: 0; flex: none; }
code { font: inherit; }
code span { display: block; white-space: pre; }
em.key { color: #5f6368; }
em.str { color: #b3100e; }
em.bool { color: #1c12b0; }
.console .prompt { margin: 8px 0 0 11px; }

.activate { position: absolute; right: 134px; bottom: 12px; width: 155px; color: rgba(160, 160, 165, .8); white-space: nowrap; font-size: 20px; }
.activate p { margin: 0; line-height: 26px; }
.activate small { font-size: 14px; line-height: 20px; display: block; }
.credit { position: absolute; right: 8px; bottom: 4px; font: 18px/24px "Liberation Serif", "Noto Sans CJK SC", serif; color: rgba(130, 132, 138, .75); }
.meter { position: absolute; right: 0; bottom: 2px; width: 10px; height: 59px; border-radius: 4px 0 0 4px; border: solid #34384a; border-width: 20px 2px 5px 4px; background: repeating-linear-gradient(#b7cf63 0 1px, #34384a 1px 3px); }
.dock { position: absolute; right: 24px; bottom: 0; width: 173px; height: 3px; background: #23252e; border-radius: 4px 4px 0 0; }
</style>
